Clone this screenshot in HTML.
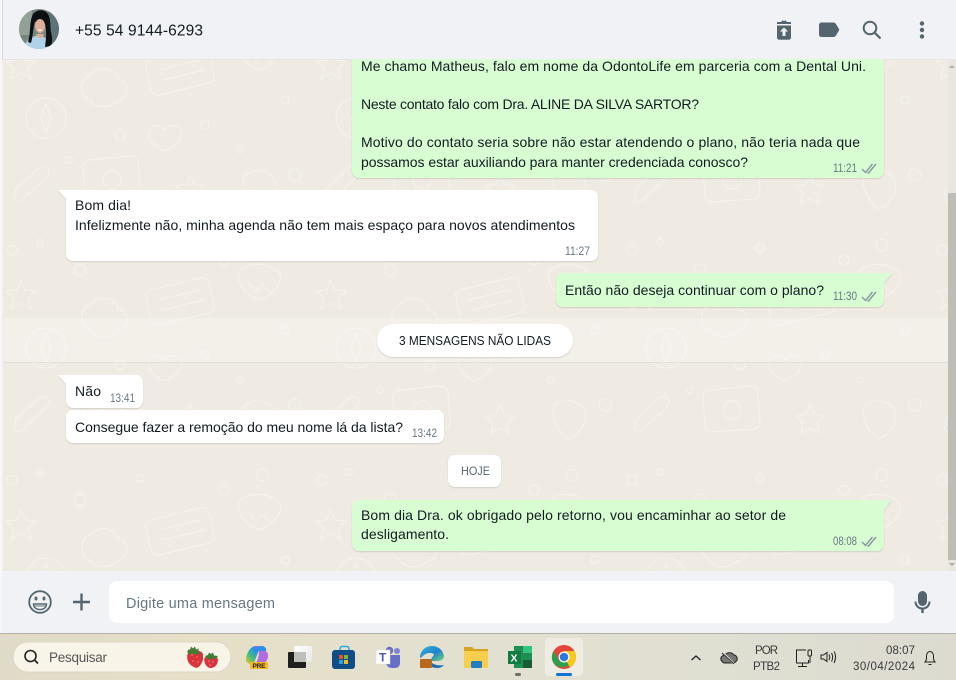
<!DOCTYPE html>
<html lang="pt">
<head>
<meta charset="utf-8">
<title>WhatsApp</title>
<style>
html,body{margin:0;padding:0;width:956px;height:680px;overflow:hidden;background:#efeae2}
svg{display:block;position:absolute;left:0;top:0}
text{font-family:"Liberation Sans",sans-serif;fill:#111b21;font-size:14px}
.t{font-size:11.5px;fill:#667781}
.tk{fill:#3a3a3a;font-size:11.5px}
</style>
</head>
<body>
<svg width="956" height="680" viewBox="0 0 956 680" xmlns="http://www.w3.org/2000/svg">
<defs>
<pattern id="doodle" width="310" height="230" patternUnits="userSpaceOnUse">
<g fill="none" stroke="#f4f1eb" stroke-width="1.200">
<circle cx="12" cy="20" r="5"/><circle cx="40" cy="12" r="3"/><circle cx="80" cy="40" r="6"/><circle cx="140" cy="18" r="4"/>
<path d="M20 50l5 10 11 1-8 7 3 11-10-6-10 6 3-11-8-7 11-1z"/>
<circle cx="46" cy="118" r="20"/><path d="M46 104l5 14-5 14-5-14z"/>
<path d="M90 75c8-10 26-8 28 4 12 2 12 20-1 22-6 8-22 8-27-1-12-4-10-22 0-25z"/>
<path d="M150 60l50-12c5-1 8 1 9 5l5 22c1 4-1 7-5 8l-50 12c-4 1-7-1-8-5l-5-22c-1-4 0-7 4-8z"/>
<path d="M158 70l42-10M162 80l42-10"/>
<path d="M15 190l24-22c6-5 14 3 8 9l-26 24c-4 3-9-2-5-6z"/>
<path d="M165 130c6-9 20-3 16 7-2 6-10 11-16 14-7-3-14-8-16-14-3-10 10-16 16-7z"/>
<circle cx="120" cy="135" r="5"/><circle cx="205" cy="125" r="4"/><circle cx="70" cy="160" r="3"/><circle cx="262" cy="15" r="6"/><circle cx="285" cy="100" r="4"/><circle cx="240" cy="150" r="3"/>
<path d="M90 160l40-4c5 0 8 3 8 7l2 28c0 5-3 8-7 8l-40 3c-5 0-8-3-8-7l-2-27c0-5 3-8 7-8z"/>
<circle cx="112" cy="180" r="9"/>
<path d="M190 175l4 9 10 2-7 7 2 10-9-5-9 5 2-10-7-7 10-2z"/>
<path d="M240 40c10-8 30-8 40 4 3 8-6 20-20 26-14-4-26-18-20-30zM248 52l8 10 6-8 8 8"/>
<path d="M245 175c10-8 26-4 30 6s-6 24-16 28c-10-6-20-24-14-34z"/>
<circle cx="295" cy="175" r="6"/><circle cx="224" cy="30" r="5"/>
</g>
</pattern>
<linearGradient id="bar" x1="0" y1="0" x2="1" y2="0">
<stop offset="0" stop-color="#dfdbc8"/><stop offset=".2" stop-color="#e7dfc6"/><stop offset=".45" stop-color="#e3e0d0"/><stop offset=".75" stop-color="#dfdfd2"/><stop offset="1" stop-color="#dddbd0"/>
</linearGradient>
<linearGradient id="cop" x1="0" y1="1" x2="1" y2="0">
<stop offset="0" stop-color="#f7c52b"/><stop offset=".35" stop-color="#3fc07a"/><stop offset=".65" stop-color="#2a8fe8"/><stop offset="1" stop-color="#b86bdc"/>
</linearGradient>
<linearGradient id="edge" x1="0" y1="0" x2="1" y2="1">
<stop offset="0" stop-color="#35b8d8"/><stop offset=".55" stop-color="#1f82cf"/><stop offset="1" stop-color="#76d96e"/>
</linearGradient>
<linearGradient id="win" x1="0" y1="0" x2="1" y2="1">
<stop offset="0" stop-color="#ffffff"/><stop offset="1" stop-color="#e8e8e4"/>
</linearGradient>
<clipPath id="av"><circle cx="39" cy="29" r="20"/></clipPath>
</defs>

<!-- chat background -->
<rect x="0" y="0" width="956" height="680" fill="#efeae2"/>
<rect x="0" y="59" width="956" height="512" fill="url(#doodle)"/>
<rect x="0" y="0" width="2.500" height="633" fill="#f7f7f7"/>

<!-- unread band -->
<rect x="3" y="318" width="945" height="44" fill="#ffffff" opacity=".25"/>
<rect x="3" y="362" width="945" height="1" fill="#e2dfd9"/>

<!-- scrollbar -->
<rect x="948" y="59" width="8" height="512" fill="#e9e6e0"/>
<rect x="948" y="193" width="8" height="367" fill="#bebdb8"/>
<path d="M949 68l3-3 3 3z" fill="#b0b0b0"/><path d="M949 563l3 3 3-3z" fill="#a8a8a8"/>

<!-- header -->
<rect x="2" y="0" width="954" height="59" fill="#f0f2f5"/>
<rect x="2" y="59" width="954" height="1" fill="#e6e6e4"/>
<rect x="2" y="0" width="1" height="59" fill="#d5d7da"/>
<g clip-path="url(#av)">
<rect x="19" y="9" width="40" height="40" fill="#75867f"/>
<rect x="19" y="9" width="13" height="26" fill="#93a096"/>
<rect x="48" y="9" width="11" height="40" fill="#5d7377"/>
<path d="M24 49c1-8 6-13 14-13s12 5 12 13z" fill="#aed2e8"/>
<path d="M33 14c4-5 12-5 15 0 3 5 2 12 3 18 1 5 2 9 0 14l-6 1c1-8 2-15 0-23-2-3-8-4-10-2-2 6-2 14-4 21l-3-1c3-9 1-20 5-28z" fill="#0d1012"/>
<ellipse cx="40" cy="26" rx="5" ry="7" fill="#dcae9b"/>
<path d="M37.500 29.500h5l-2.500 1.800z" fill="#fff"/>
<path d="M36 34h8l-2 4h-4z" fill="#dcae9b"/>
</g>
<text x="75" y="35.500" style="font-size:15.500px" textLength="128" lengthAdjust="spacing">+55 54 9144-6293</text>

<!-- header icons -->
<g fill="#54656f">
<path d="M777 25.500h14v12c0 1.300-.9 2.200-2.200 2.200h-9.600c-1.300 0-2.200-.9-2.200-2.200zM777 22h4l1-1.200h4l1 1.200h4v2h-14zM784 27.500l-4 4h2.500v4.500h3v-4.500h2.500z" fill-rule="evenodd"/>
<path d="M821.500 22.500h12c1 0 1.700.5 2.300 1.200l3.200 5.300c.3.500.3 1 0 1.500l-3.200 5.300c-.6.700-1.300 1.200-2.300 1.200h-12c-1.400 0-2.500-1.100-2.500-2.500v-9.500c0-1.400 1.100-2.500 2.500-2.500z"/>
<circle cx="922" cy="23.500" r="2.200"/><circle cx="922" cy="30" r="2.200"/><circle cx="922" cy="36.500" r="2.200"/>
</g>
<g fill="none" stroke="#54656f" stroke-width="2">
<circle cx="870" cy="28" r="6.300"/>
<path d="M874.800 32.800l5.700 5.700" stroke-width="2.200"/>
</g>

<!-- bubbles -->
<g style="filter:drop-shadow(0 1px .5px rgba(11,20,26,.13))">
<path d="M352 59h532v112a7 7 0 0 1-7 7H359a7 7 0 0 1-7-7z" fill="#d9fdd3"/>
<path d="M58 190h533a7 7 0 0 1 7 7v57a7 7 0 0 1-7 7H73a7 7 0 0 1-7-7v-55z" fill="#fff"/>
<path d="M563 273h329l-8 10v17a7 7 0 0 1-7 7H563a7 7 0 0 1-7-7v-20a7 7 0 0 1 7-7z" fill="#d9fdd3"/>
<rect x="377" y="324" width="196" height="33" rx="16.500" fill="#fff"/>
<path d="M58 375h78a7 7 0 0 1 7 7v19a7 7 0 0 1-7 7H73a7 7 0 0 1-7-7v-17z" fill="#fff"/>
<rect x="66" y="410" width="378" height="33" rx="7" fill="#fff"/>
<rect x="448" y="455" width="53" height="32" rx="7" fill="#fff"/>
<path d="M359 500h532l-7 10v34a7 7 0 0 1-7 7H359a7 7 0 0 1-7-7v-37a7 7 0 0 1 7-7z" fill="#d9fdd3"/>
</g>

<!-- message text -->
<text x="361" y="71" textLength="505" lengthAdjust="spacing">Me chamo Matheus, falo em nome da OdontoLife em parceria com a Dental Uni.</text>
<text x="361" y="109" textLength="338" lengthAdjust="spacing">Neste contato falo com Dra. ALINE DA SILVA SARTOR?</text>
<text x="361" y="147" textLength="499" lengthAdjust="spacing">Motivo do contato seria sobre não estar atendendo o plano, não teria nada que</text>
<text x="361" y="167" textLength="387" lengthAdjust="spacing">possamos estar auxiliando para manter credenciada conosco?</text>
<text class="t" x="833" y="172" textLength="24" lengthAdjust="spacingAndGlyphs">11:21</text>

<text x="75" y="210" textLength="56" lengthAdjust="spacing">Bom dia!</text>
<text x="75" y="230" textLength="500" lengthAdjust="spacing">Infelizmente não, minha agenda não tem mais espaço para novos atendimentos</text>
<text class="t" x="565" y="255" textLength="25" lengthAdjust="spacingAndGlyphs">11:27</text>

<text x="565" y="295" textLength="259" lengthAdjust="spacing">Então não deseja continuar com o plano?</text>
<text class="t" x="833" y="300" textLength="24" lengthAdjust="spacingAndGlyphs">11:30</text>

<text x="399" y="345" style="font-size:12.500px" textLength="152" lengthAdjust="spacingAndGlyphs">3 MENSAGENS NÃO LIDAS</text>

<text x="75" y="396" textLength="26" lengthAdjust="spacing">Não</text>
<text class="t" x="110" y="402" textLength="25" lengthAdjust="spacingAndGlyphs">13:41</text>
<text x="75" y="432" textLength="328" lengthAdjust="spacing">Consegue fazer a remoção do meu nome lá da lista?</text>
<text class="t" x="412" y="437" textLength="25" lengthAdjust="spacingAndGlyphs">13:42</text>

<text x="461" y="475" style="font-size:12px;fill:#54656f" textLength="29" lengthAdjust="spacingAndGlyphs">HOJE</text>

<text x="361" y="520" textLength="425" lengthAdjust="spacing">Bom dia Dra. ok obrigado pelo retorno, vou encaminhar ao setor de</text>
<text x="361" y="539" textLength="88" lengthAdjust="spacing">desligamento.</text>
<text class="t" x="833" y="545" textLength="24" lengthAdjust="spacingAndGlyphs">08:08</text>

<!-- double checks -->
<g fill="none" stroke="#8696a0" stroke-width="1.400">
<path d="M862 169l3.500 3.500 7-8.500M867.500 172.500l1 .500 7.500-9"/>
<path d="M862 297l3.500 3.500 7-8.500M867.500 300.500l1 .500 7.500-9"/>
<path d="M862 542l3.500 3.500 7-8.500M867.500 545.500l1 .500 7.500-9"/>
</g>

<!-- footer -->
<rect x="2" y="571" width="954" height="62" fill="#f0f2f5"/>
<rect x="109" y="581" width="785" height="42" rx="8" fill="#fff"/>
<text x="126" y="608" style="font-size:14.500px;fill:#667781" textLength="149" lengthAdjust="spacing">Digite uma mensagem</text>
<g fill="none" stroke="#54656f">
<circle cx="40" cy="602" r="10.800" stroke-width="1.800"/>
<path d="M73 602h17M81.500 593.500v17" stroke-width="2.400"/>
<path d="M33.500 604h13c0 3.500-2.800 5.500-6.500 5.500s-6.500-2-6.500-5.500z" stroke-width="1.400" fill="#fff"/>
<path d="M34 606h12" stroke-width="1"/>
</g>
<g fill="#54656f">
<ellipse cx="36" cy="598.500" rx="1.500" ry="2"/><ellipse cx="44" cy="598.500" rx="1.500" ry="2"/>
<rect x="918" y="591" width="9" height="15" rx="4.500"/>
<path d="M914.500 601.500c0 4.500 3 7.500 6.800 8v3.500h2.400v-3.500c3.800-.5 6.800-3.500 6.800-8h-2c0 3.300-2.600 6-6 6s-6-2.700-6-6z"/>
</g>

<!-- taskbar -->
<rect x="0" y="633" width="956" height="47" fill="url(#bar)"/>
<rect x="0" y="633" width="956" height="1" fill="#b3b2a9"/>
<rect x="13" y="642" width="218" height="30" rx="15" fill="#f8f4e8" stroke="#dbd6c6"/>
<circle cx="30.500" cy="656" r="5.500" fill="none" stroke="#222" stroke-width="1.600"/>
<path d="M34.500 660l3.500 3.500" stroke="#222" stroke-width="1.800"/>
<text x="49" y="662" style="font-size:13.500px;fill:#555" textLength="58" lengthAdjust="spacing">Pesquisar</text>
<!-- strawberries -->
<path d="M187.500 654c3-4 12-5 15-1 1 3 1 8-1.500 11-1.500 3-4 4.500-6 3.500-3-1-7-4-7.500-8-.5-2-.5-4 0-5.500z" fill="#d8343c"/>
<path d="M187 652l2-3 1 1 1-3.500 2 2 2-2 1 3 3-1-1 3 3 2-5 1-3-1-3 1z" fill="#3f7d34"/>
<path d="M204.500 658c3-3 10-3 13 0 1 3 0 6-2 8s-5 2.500-7 1.500c-3-1.500-5-6-4-9.500z" fill="#d8343e"/>
<path d="M205 656l3-1 1-2.500 2 1.500 2-1.500 1 3 4 .5-2 2.500-4 0-3 1-2-1z" fill="#3f7d34"/>
<g fill="#f2b8a8"><circle cx="192" cy="655" r=".6"/><circle cx="197" cy="657" r=".6"/><circle cx="193" cy="661" r=".6"/><circle cx="198" cy="662" r=".6"/><circle cx="209" cy="661" r=".6"/><circle cx="213" cy="662" r=".6"/><circle cx="210" cy="665" r=".6"/></g>
<!-- copilot -->
<path d="M246 660c0-6 4-13 9-14h8c-3 2-5 6-6 9l-3 8c-4 2-8 0-8-3z" fill="url(#cop)"/>
<path d="M255 651c2-4 5-5 8-5 2 1 4 3 3 5h-7z" fill="#2e8de6"/>
<path d="M259 651h5c3 0 4 2 4 5 0 4-3 8-7 8h-6c3-3 4-9 4-13z" fill="#b26be0"/>
<rect x="250" y="662" width="18" height="7" rx="1" fill="#f5b81f"/>
<text x="252.500" y="668" style="font-size:6.500px;font-weight:700;fill:#222" textLength="13" lengthAdjust="spacing">PRE</text>
<!-- window app -->
<rect x="288" y="652" width="18" height="16" rx="1" fill="#1f1f1f"/>
<rect x="294" y="646" width="18" height="16" rx="1" fill="url(#win)"/>
<rect x="294" y="652" width="12" height="10" fill="#bfbfbb"/>
<!-- store -->
<path d="M340 652v-3c0-1.500 1-2.500 2-2.500h5c1 0 2 1 2 2.500v3" fill="none" stroke="#2aa8e0" stroke-width="1.500"/>
<rect x="332" y="650" width="23" height="19" rx="3" fill="#0f4d86"/>
<rect x="339" y="655" width="4" height="4" fill="#e8512b"/><rect x="344" y="655" width="4" height="4" fill="#7ab92f"/>
<rect x="339" y="660" width="4" height="4" fill="#29a3e0"/><rect x="344" y="660" width="4" height="4" fill="#f8b71c"/>
<!-- teams -->
<circle cx="397" cy="651" r="3" fill="#7b83d9"/><circle cx="389.500" cy="650.500" r="3.800" fill="#6670c9"/>
<path d="M386 655h14v8c0 3-2 5-5 5h-3c-3 0-6-2-6-6z" fill="#6670c9"/>
<rect x="376" y="650" width="14" height="14" fill="#fff" stroke="#d8d8e8" stroke-width=".5"/>
<text x="379" y="661.500" style="font-size:12px;font-weight:700;fill:#4e58b5">T</text>
<!-- edge -->
<path d="M420 658c0-7 5-12 12-12 6 0 11 4 12 10 0 3-3 5-6 5h-7c0-4 3-5 3-7-4-2-9-1-12 3z" fill="url(#edge)"/>
<path d="M424 662c3 3 8 6 13 6 3 0 5-1 7-3-5 1-9 0-12-2z" fill="#1a6fb8"/>
<rect x="420" y="659" width="12" height="9" rx="1" fill="#b8691b"/>
<!-- folder -->
<path d="M464 647h8l2 2h14v5h-24z" fill="#d9a21e"/>
<rect x="464" y="651" width="24" height="17" fill="#f8cf4d"/>
<rect x="471" y="661" width="11" height="7" rx="1.500" fill="#1f7fc4"/>
<!-- excel -->
<rect x="514" y="646" width="18" height="22" fill="#1d8f52"/>
<rect x="523" y="646" width="9" height="7" fill="#33c481"/>
<rect x="523" y="660" width="9" height="8" fill="#185c37"/>
<rect x="508" y="651" width="13" height="13" fill="#107c41"/>
<text x="510.500" y="661.500" style="font-size:10.500px;font-weight:700;fill:#fff">X</text>
<rect x="515" y="673" width="6" height="3" rx="1.500" fill="#6e6e6a"/>
<!-- chrome -->
<rect x="545" y="638" width="38" height="38" rx="4" fill="#eeece3"/>
<circle cx="564" cy="657" r="12" fill="#e6463a"/>
<path d="M553.600 651l6 10.500-5.900 2A12 12 0 0 1 553.600 651z" fill="#2f9e48"/>
<path d="M554 664l6.500-3.500 3.500 1.500 5.500-.5 4.500-4.500A12 12 0 0 1 554 664z" fill="#2f9e48"/>
<path d="M564 651h10.400a12 12 0 0 1-4.400 16.400L564 657z" fill="#f9c91a"/>
<circle cx="564" cy="657" r="5.500" fill="#fff"/>
<circle cx="564" cy="657" r="4.300" fill="#2c7ae0"/>
<rect x="556" y="673" width="16" height="3" rx="1.500" fill="#0a74cf"/>

<!-- tray -->
<path d="M691.500 660l4.500-4 4.500 4" fill="none" stroke="#222" stroke-width="1.300"/>
<path d="M721 660c-1-3 2-5 4-5 2-3 7-3 9 0 2 0 4 3 3 5-1 2-2 3-4 3h-8c-2 0-3-1-4-3z" fill="#777" stroke="#222" stroke-width="1"/>
<path d="M722 652l13 13" stroke="#e4e2d6" stroke-width="2"/><path d="M722 653l12 11" stroke="#222" stroke-width="1"/>
<text class="tk" x="755" y="654" textLength="23" lengthAdjust="spacing">POR</text>
<text class="tk" x="753" y="670" textLength="27" lengthAdjust="spacing">PTB2</text>
<g fill="none" stroke="#222" stroke-width="1">
<path d="M806 650h-9.500v13h12v-3"/><path d="M802.500 663v3M798 666.500h9"/>
<rect x="808" y="650" width="3.500" height="6" rx="1"/><path d="M810 656v7"/>
<path d="M821 655h2.500l3.500-2.500v9l-3.500-2.500H821z"/>
<path d="M829 654.500c1 1.500 1 4 0 5.500M831.500 653c1.500 2.500 1.500 6 0 8.500M834 651.500c2 3 2 8 0 11.500"/>
<path d="M925 662c1-1 1.500-2 1.500-4v-2c0-2.500 1.500-4.500 3.500-4.500s3.500 2 3.500 4.500v2c0 2 .5 3 1.500 4zM928.500 664.500h3"/>
</g>
<text class="tk" x="886" y="654" textLength="29" lengthAdjust="spacing">08:07</text>
<text class="tk" x="853" y="670" textLength="62" lengthAdjust="spacing">30/04/2024</text>
</svg>
</body>
</html>
